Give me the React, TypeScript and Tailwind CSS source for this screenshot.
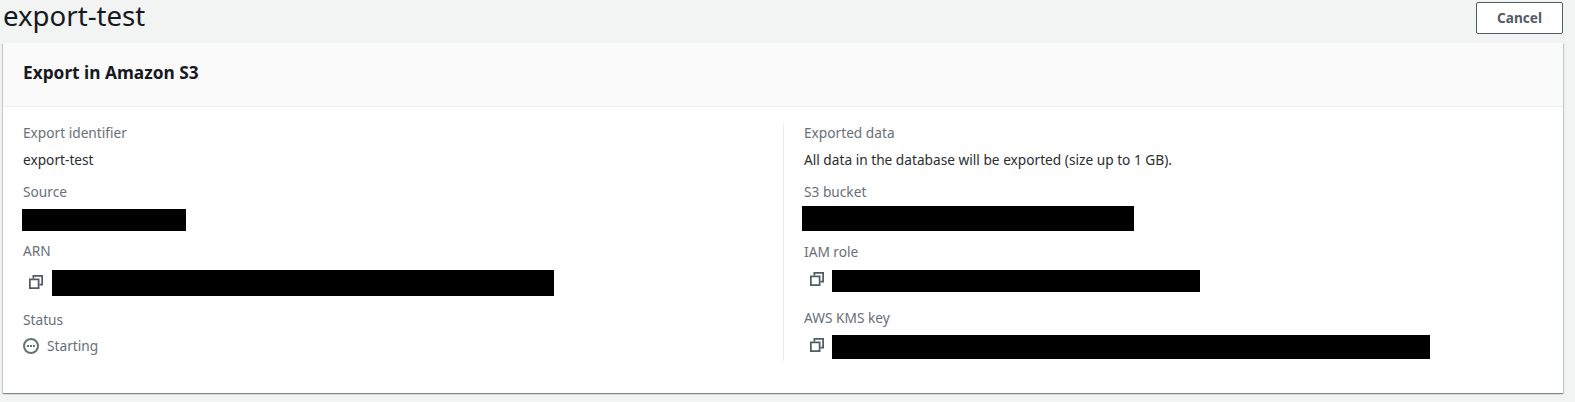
function CopyIcon({ lift }: { lift: string }) {
  return (
    <svg width="14" height="14" viewBox="0 0 16 16" fill="none" stroke="#545b64" strokeWidth="2" className={`shrink-0 ${lift}`}>
      <path d="M5 4V1h10v10h-3" />
      <rect x="1" y="5" width="10" height="10" />
    </svg>
  );
}

function StatusIcon() {
  return (
    <svg width="16" height="16" viewBox="0 0 16 16" fill="none" className="shrink-0">
      <circle cx="8" cy="8" r="7" stroke="#687078" strokeWidth="2" />
      <rect x="4" y="7" width="2" height="2" fill="#687078" />
      <rect x="7" y="7" width="2" height="2" fill="#687078" />
      <rect x="10" y="7" width="2" height="2" fill="#687078" />
    </svg>
  );
}

function Label({ children, className = "" }: { children: React.ReactNode; className?: string }) {
  return <div className={`h-5 leading-5 text-[#687078] ${className}`}>{children}</div>;
}

function Value({ children }: { children: React.ReactNode }) {
  return <div className="h-5 leading-5 text-[#2a2e33]">{children}</div>;
}

export default function App() {
  return (
    <div className="w-[1575px] h-[402px] overflow-hidden bg-[#f2f3f3] text-[13.7px] font-['Noto_Sans','Open_Sans',sans-serif]">
      <div className="h-[43px] flex justify-between pl-[3px] pr-[12px]">
        <h1 className="text-[27.6px] leading-[30px] text-[#16191f] font-normal">export-test</h1>
        <button className="mt-[2px] w-[87px] h-[32px] bg-white border border-[#545b64] rounded-[2px] text-[13.6px] font-bold text-[#545b64]">
          Cancel
        </button>
      </div>
      <div className="ml-[3px] w-[1560px] h-[350px] bg-white shadow-[0_1px_1px_0_rgba(0,28,36,0.3),1px_1px_1px_0_rgba(0,28,36,0.15),-1px_1px_1px_0_rgba(0,28,36,0.15)]">
        <div className="h-[64px] bg-[#fafafa] border-b border-[#eaeded] pl-[20px] pt-[19px]">
          <h2 className="text-[17.3px] leading-[22px] font-bold text-[#16191f]">Export in Amazon S3</h2>
        </div>
        <div className="flex pl-[20px] pt-[16px]">
          <div className="w-[760px] h-[238px]">
            <Label>Export identifier</Label>
            <div className="mt-[7px]"><Value>export-test</Value></div>
            <Label className="mt-[12px]">Source</Label>
            <div className="mt-[7px] -ml-[1px] w-[164px] h-[22px] bg-black" />
            <Label className="mt-[10px]">ARN</Label>
            <div className="mt-[9px] flex items-center h-[26px] pl-[6px]">
              <CopyIcon lift="-translate-y-[1px]" />
              <div className="ml-[9px] w-[502px] h-[26px] bg-black" />
            </div>
            <Label className="mt-[14px]">Status</Label>
            <div className="mt-[6px] flex items-center gap-[8px] text-[#687078]">
              <StatusIcon />
              <span className="h-5 leading-5">Starting</span>
            </div>
          </div>
          <div className="border-l border-[#eaeded] pl-[20px] h-[238px] w-[700px]">
            <Label>Exported data</Label>
            <div className="mt-[7px]"><Value>All data in the database will be exported (size up to 1 GB).</Value></div>
            <Label className="mt-[12px]">S3 bucket</Label>
            <div className="mt-[4px] -ml-[2px] w-[332px] h-[25px] bg-black" />
            <Label className="mt-[11px]">IAM role</Label>
            <div className="mt-[8px] flex items-center h-[22px] pl-[6px]">
              <CopyIcon lift="-translate-y-[2px]" />
              <div className="ml-[8px] w-[368px] h-[22px] bg-black" />
            </div>
            <Label className="mt-[16px]">AWS KMS key</Label>
            <div className="mt-[7px] flex items-center h-[24px] pl-[6px]">
              <CopyIcon lift="-translate-y-[2px]" />
              <div className="ml-[8px] w-[598px] h-[24px] bg-black" />
            </div>
          </div>
        </div>
      </div>
    </div>
  );
}
